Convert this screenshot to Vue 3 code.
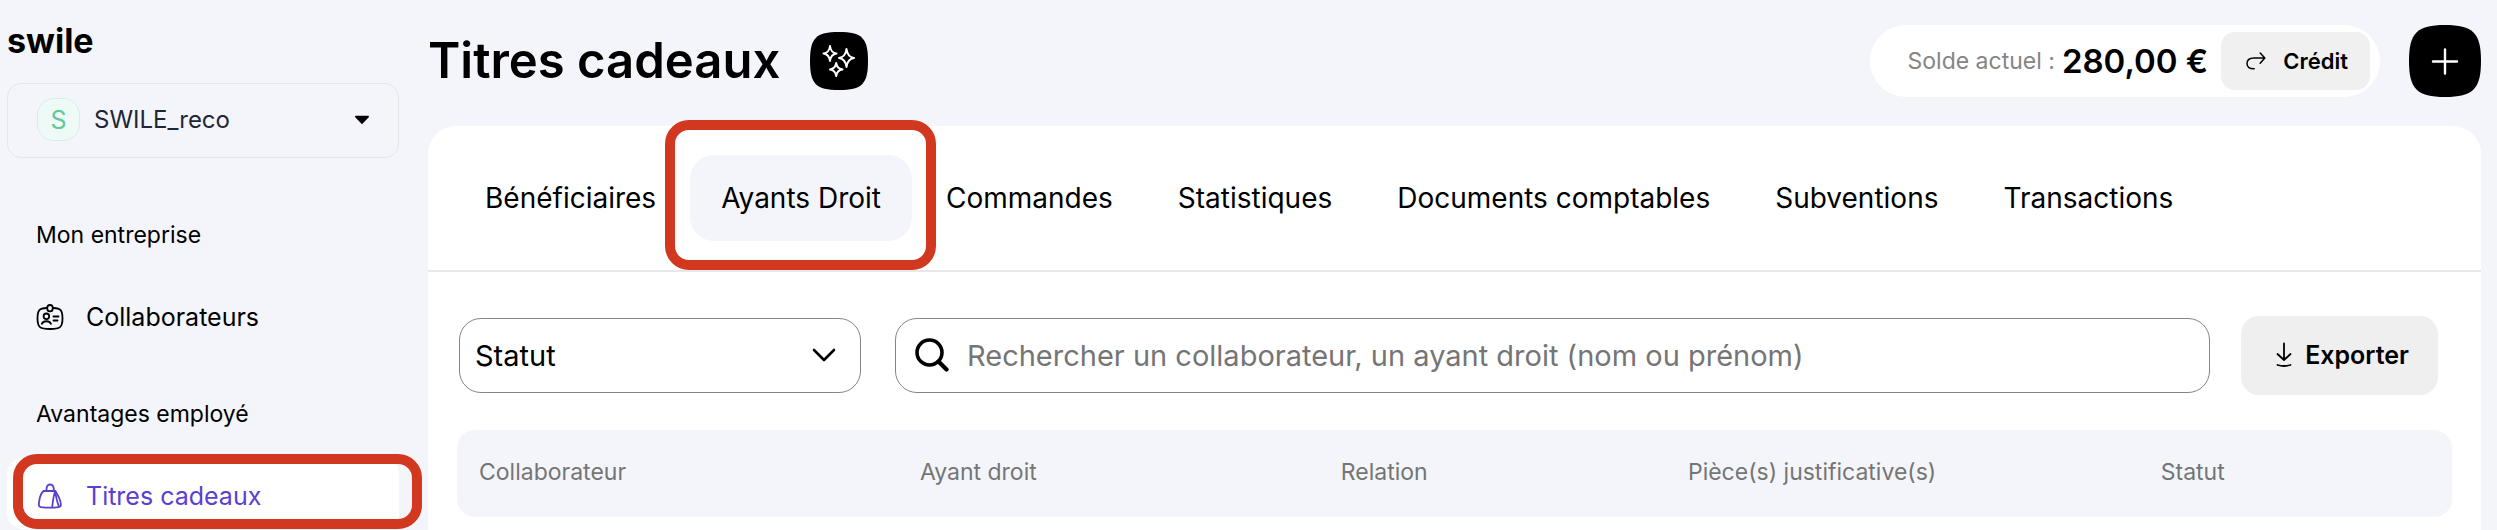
<script setup>
import { ref } from 'vue'

const tabs = ['Bénéficiaires', 'Ayants Droit', 'Commandes', 'Statistiques', 'Documents comptables', 'Subventions', 'Transactions']
const activeTab = ref('Ayants Droit')
const columns = [
  { key: 'collab', label: 'Collaborateur' },
  { key: 'ayant', label: 'Ayant droit' },
  { key: 'relation', label: 'Relation' },
  { key: 'piece', label: 'Pièce(s) justificative(s)' },
  { key: 'statut', label: 'Statut' }
]
const search = ref('')
const status = ref('')
</script>

<template>
  <div class="layout">
    <aside class="sidebar">
      <a class="logo" href="#">swile</a>
      <button class="company" type="button">
        <span class="avatar">S</span>
        <span class="company-name">SWILE_reco</span>
        <svg class="caret" viewBox="0 0 16 10" aria-hidden="true"><path d="M1.500 .8h13L15 2 8 9.300 1 2z" fill="#000" /></svg>
      </button>
      <nav class="nav">
        <h2 class="nav-title">Mon entreprise</h2>
        <a class="nav-link" href="#">
          <svg class="nav-icon" viewBox="0 0 28 28" fill="none" stroke="currentColor" stroke-width="1.800" stroke-linecap="round" aria-hidden="true">
            <path d="M10.500 5C3.500 5.200 1.500 7 1.500 15.500 1.500 24.500 4 26 14 26s12.500-1.500 12.500-10.500C26.500 7 24.500 5.200 17.500 5" />
            <rect x="11.300" y="2" width="5.400" height="6.400" rx="2.600" />
            <circle cx="10.400" cy="13.300" r="2.800" />
            <path d="M5.800 20.800c1.600-3.400 7.600-3.400 9.200 0M17.500 13.500h5M17.500 17.500h4" />
          </svg>
          <span>Collaborateurs</span>
        </a>
        <h2 class="nav-title second">Avantages employé</h2>
        <a class="nav-link active" href="#" aria-current="page">
          <svg class="nav-icon" viewBox="0 0 28 28" fill="none" stroke="currentColor" stroke-width="1.800" stroke-linecap="round" stroke-linejoin="round" aria-hidden="true">
            <path d="M7.500 9h11.800c2.300 3.500 5.300 9 5.600 13.600.1 1.700-.8 2.300-2.500 2.500-5 .6-12 .6-17.300 0-2-.3-2.500-1.200-2.300-3C3.200 17.500 4.800 11.500 7.500 9z" />
            <path d="M10.500 8.800c-.2-4.500 1-6.300 3.600-6.300s3.900 1.800 3.700 6.300M19.300 9c-2 5-2.400 10.500-3.100 16M19.300 9c.7 6 1.700 11 3.700 15.500" />
          </svg>
          <span>Titres cadeaux</span>
          <span class="highlight"></span>
        </a>
      </nav>
    </aside>

    <main class="content">
      <header class="header">
        <h1 class="title">Titres cadeaux</h1>
        <button class="squircle small" type="button" aria-label="Nouveautés">
          <svg viewBox="0 0 58 58" aria-hidden="true">
            <path d="M0 29C0 6 6 0 29 0s29 6 29 29-6 29-29 29S0 52 0 29z" fill="#000" />
            <g fill="none" stroke="#fff" stroke-width="2" stroke-linejoin="round" stroke-linecap="round">
              <path d="M20 14q.8 6.700 6.500 7.500-5.700.8-6.500 7.500-.8-6.700-6.500-7.500 5.700-.8 6.500-7.500z" />
              <path d="M36.500 17q1 8 7.500 9-6.500 1-7.500 9-1-8-7.500-9 6.500-1 7.500-9z" />
              <path d="M26.200 31q.8 5.700 6.300 6.500-5.500.8-6.300 6.500-.8-5.700-6.200-6.500 5.400-.8 6.200-6.500z" />
            </g>
          </svg>
        </button>
        <div class="balance">
          <span class="balance-label">Solde actuel :</span>
          <strong class="balance-value">280,00 €</strong>
          <button class="credit" type="button">
            <svg class="credit-icon" viewBox="0 0 20 18" fill="none" stroke="#000" stroke-width="1.500" stroke-linecap="round" stroke-linejoin="round" aria-hidden="true">
              <path d="M14.200 1l4.600 5-4.600 5.200M18.500 6H8C3.500 6 1 8 1 11.500 1 15 3.500 17 8.200 16.800" />
            </svg>
            <span>Crédit</span>
          </button>
        </div>
        <button class="squircle large" type="button" aria-label="Ajouter">
          <svg viewBox="0 0 72 72" aria-hidden="true">
            <path d="M0 36C0 8 8 0 36 0s36 8 36 36-8 36-36 36S0 64 0 36z" fill="#000" />
            <path d="M36 24.500v24M24 36.500h24" stroke="#fff" stroke-width="2.400" stroke-linecap="round" />
          </svg>
        </button>
      </header>

      <section class="panel">
        <nav class="tabs">
          <button v-for="tab in tabs" :key="tab" type="button" class="tab" :class="{ current: tab === activeTab }" @click="activeTab = tab">
            {{ tab }}
            <span v-if="tab === 'Ayants Droit'" class="highlight"></span>
          </button>
        </nav>
        <div class="filters">
          <div class="select-box">
            <select v-model="status" class="select" aria-label="Statut">
              <option value="">Statut</option>
            </select>
            <svg class="chevron" viewBox="0 0 24 14" fill="none" stroke="#000" stroke-width="2.600" stroke-linecap="round" stroke-linejoin="round" aria-hidden="true"><path d="M2 2l10 10L22 2" /></svg>
          </div>
          <label class="search">
            <svg class="search-icon" viewBox="0 0 34 34" fill="none" stroke="#000" stroke-linecap="round" aria-hidden="true">
              <circle cx="14.500" cy="14.500" r="12.500" stroke-width="3.600" />
              <path d="M23.500 23.500l8 8" stroke-width="4.200" />
            </svg>
            <input v-model="search" class="search-input" type="text" aria-label="Rechercher" placeholder="Rechercher un collaborateur, un ayant droit (nom ou prénom)" />
          </label>
          <button class="export" type="button">
            <svg class="export-icon" viewBox="0 0 16 26" fill="none" stroke="#000" stroke-width="1.800" stroke-linecap="round" stroke-linejoin="round" aria-hidden="true">
              <path d="M8 1.500v16M1.500 12L8 18l6.500-6M1.500 23q6.500 2 13 0" />
            </svg>
            <span>Exporter</span>
          </button>
        </div>
        <table class="table">
          <thead>
            <tr>
              <th v-for="col in columns" :key="col.key" scope="col" :class="col.key">{{ col.label }}</th>
            </tr>
          </thead>
        </table>
      </section>
    </main>
  </div>
</template>

<style>
body {
  margin: 0;
  background: #f4f5fa;
}
</style>

<style scoped>
.layout {
  display: grid;
  grid-template-columns: 428px minmax(0, 1fr);
  min-height: 100vh;
  box-sizing: border-box;
  padding-right: 16px;
  background: #f4f5fa;
  color: #000;
  font-family: Inter, "Liberation Sans", sans-serif;
}
.layout * {
  box-sizing: border-box;
}
button,
input,
select {
  font-family: inherit;
  color: inherit;
  border: 0;
  margin: 0;
  padding: 0;
  background: none;
}
a {
  color: inherit;
  text-decoration: none;
}
svg {
  display: block;
  flex: none;
}

.sidebar {
  display: flex;
  flex-direction: column;
  padding: 17px 29px 0 7px;
}
.logo {
  font-size: 34px;
  line-height: 48px;
  font-weight: 700;
}
.company {
  display: flex;
  align-items: center;
  height: 75px;
  margin-top: 18px;
  padding: 0 28px 2px 29px;
  border: 1px solid #e6e6e8;
  border-radius: 14px;
}
.avatar {
  display: flex;
  align-items: center;
  justify-content: center;
  width: 43px;
  height: 43px;
  border: 1px solid #dcece5;
  border-radius: 17px;
  background: #edfaf5;
  color: #62c799;
  font-size: 25px;
}
.company-name {
  flex: 1;
  padding-left: 14px;
  text-align: left;
  font-size: 24px;
  color: #1e2738;
}
.caret {
  width: 16px;
  height: 10px;
}
.nav {
  display: flex;
  flex-direction: column;
}
.nav-title {
  margin: 59px 0 0;
  padding-left: 29px;
  font-size: 23px;
  line-height: 36px;
  font-weight: 400;
}
.nav-title.second {
  margin-top: 44px;
}
.nav-link {
  position: relative;
  display: flex;
  align-items: center;
  gap: 22px;
  height: 71px;
  margin-top: 28px;
  padding-left: 29px;
  border-radius: 16px;
  font-size: 25px;
}
.nav-link.active {
  margin-top: 26px;
  padding-top: 5px;
  background: #fff;
  color: #5a40cf;
}
.nav-icon {
  width: 28px;
  height: 28px;
}
.highlight {
  position: absolute;
  border: 10px solid #d23820;
  border-radius: 24px;
  pointer-events: none;
}
.nav-link .highlight {
  inset: -4px -23px 0 6px;
}
.tab .highlight {
  inset: -35px -24px -29px -25px;
}

.content {
  display: flex;
  flex-direction: column;
}
.header {
  display: flex;
  align-items: center;
  height: 126px;
  padding-bottom: 4px;
}
.title {
  margin: 0;
  font-size: 49px;
  line-height: 64px;
  font-weight: 600;
}
.squircle {
  flex: none;
}
.squircle svg {
  width: 100%;
  height: 100%;
}
.small {
  width: 58px;
  height: 58px;
  margin-left: 30px;
}
.large {
  width: 72px;
  height: 72px;
  margin-left: 29px;
}
.balance {
  display: flex;
  align-items: center;
  height: 72px;
  margin-left: auto;
  padding: 0 10px 0 38px;
  border-radius: 36px;
  background: #fff;
}
.balance-label {
  font-size: 23px;
  color: #858585;
}
.balance-value {
  margin: 0 13px 0 7px;
  font-size: 33px;
  line-height: 40px;
  font-weight: 600;
}
.credit {
  display: flex;
  align-items: center;
  gap: 17px;
  height: 58px;
  padding: 0 22px 0 25px;
  border-radius: 14px;
  background: #f0f0f0;
  font-size: 22px;
  font-weight: 600;
}
.credit-icon {
  width: 20px;
  height: 18px;
}

.panel {
  flex: 1;
  border-radius: 28px 28px 0 0;
  background: #fff;
}
.tabs {
  display: flex;
  gap: 3px;
  height: 146px;
  padding: 29px 26px 0;
  border-bottom: 2px solid #e8e8e8;
}
.tab {
  position: relative;
  height: 86px;
  padding: 0 31px;
  border-radius: 24px;
  font-size: 28px;
  white-space: nowrap;
}
.tab.current {
  background: #f4f5fa;
}
.filters {
  display: flex;
  align-items: center;
  height: 158px;
  padding: 8px 43px 0 31px;
}
.select-box {
  display: grid;
  align-items: center;
  width: 402px;
}
.select {
  grid-area: 1 / 1;
  width: 100%;
  height: 75px;
  padding: 0 48px 0 15px;
  border: 1px solid #858585;
  border-radius: 22px;
  appearance: none;
  font-size: 29px;
}
.chevron {
  grid-area: 1 / 1;
  justify-self: end;
  width: 24px;
  height: 14px;
  margin-right: 25px;
  pointer-events: none;
}
.search {
  display: flex;
  flex: 1;
  align-items: center;
  gap: 18px;
  height: 75px;
  margin: 0 31px 0 34px;
  padding: 0 19px;
  border: 1px solid #858585;
  border-radius: 22px;
}
.search-icon {
  width: 34px;
  height: 34px;
}
.search-input {
  flex: 1;
  min-width: 0;
  height: 60px;
  font-size: 29px;
  outline: 0;
}
.search-input::placeholder {
  color: #757575;
  opacity: 1;
}
.export {
  display: flex;
  align-items: center;
  gap: 13px;
  height: 79px;
  padding: 0 29px 0 35px;
  border-radius: 18px;
  background: #efefef;
  font-size: 25px;
  font-weight: 600;
}
.export-icon {
  width: 16px;
  height: 26px;
}
.table {
  width: calc(100% - 58px);
  margin: 0 29px;
  border-collapse: separate;
  border-spacing: 0;
  table-layout: fixed;
}
.table th {
  height: 87px;
  padding: 0 0 4px 22px;
  background: #f4f5fa;
  color: #757575;
  font-size: 23px;
  font-weight: 400;
  text-align: left;
}
.table th:first-child {
  border-radius: 18px 0 0 18px;
}
.table th:last-child {
  border-radius: 0 18px 18px 0;
}
.table .collab {
  width: 22.1%;
}
.table .ayant {
  width: 21.1%;
}
.table .relation {
  width: 17.4%;
}
.table .piece {
  width: 23.7%;
}
</style>
